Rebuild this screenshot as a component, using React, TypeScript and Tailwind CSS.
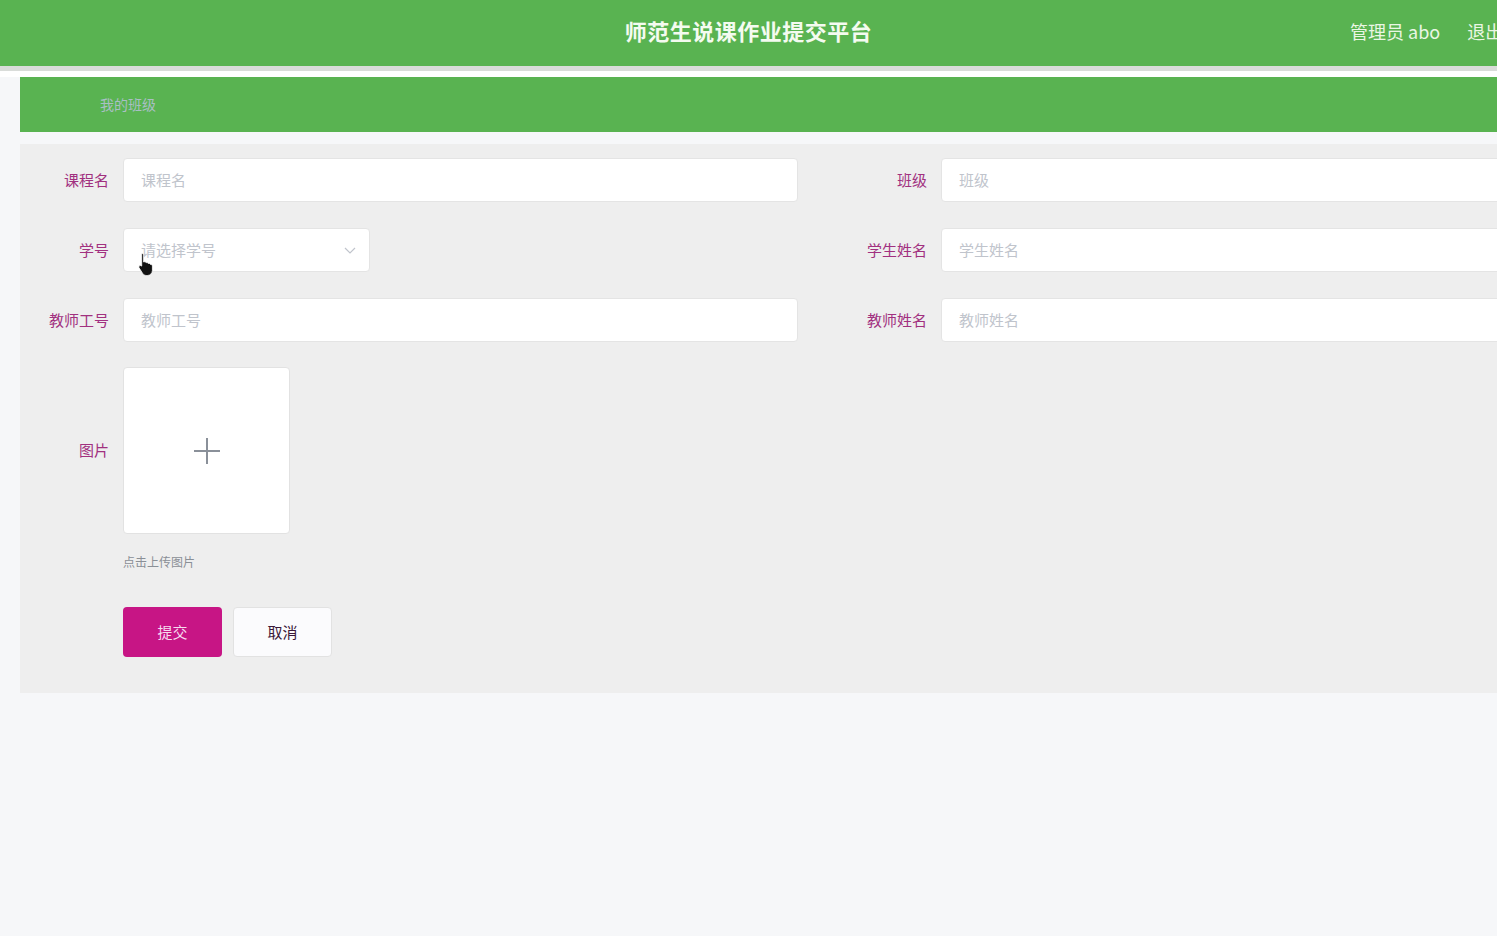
const font = { fontFamily: '"Microsoft YaHei", "Noto Sans CJK SC", "Liberation Sans", sans-serif' };

function Field({ label, placeholder, select }: { label: string; placeholder: string; select?: boolean }) {
    return (
        <div className="flex items-center h-[44px]">
            <label className="w-[103px] pr-[14px] text-right text-[15px] text-[#a1307f] shrink-0">{label}</label>
            {select ? (
                <div className="w-[247px] h-[44px] bg-white border border-[#e4e4e4] rounded-[4px] flex items-center justify-between pl-[17px] pr-[12px]">
                    <span className="text-[15px] text-[#c0c4cc]">{placeholder}</span>
                    <svg width="14" height="14" viewBox="0 0 14 14" fill="none">
                        <path d="M2 5l5 5 5-5" stroke="#c0c4cc" strokeWidth="1.2" />
                    </svg>
                </div>
            ) : (
                <div className="w-[675px] h-[44px] bg-white border border-[#e4e4e4] rounded-[4px] flex items-center pl-[17px]">
                    <span className="text-[15px] text-[#c0c4cc]">{placeholder}</span>
                </div>
            )}
        </div>
    );
}

export default function App() {
    return (
        <div className="w-[1497px] h-[936px] overflow-hidden bg-[#f6f7f9]" style={font}>
            {/* header */}
            <header className="relative h-[66px] bg-[#59b351] flex items-center justify-center pb-[5px]">
                <h1 className="text-[22px] font-bold text-[#f4fbf0] tracking-[0.5px]">师范生说课作业提交平台</h1>
                <div className="absolute left-[1350px] top-0 h-[62px] flex items-center gap-[27px] whitespace-nowrap text-[18px] text-[#eaf6e4]">
                    <span>管理员 abo</span>
                    <span>退出</span>
                </div>
            </header>
            <div className="h-[5px] bg-[#d9dcd9]"></div>
            <div className="h-[6px] bg-white"></div>

            <div className="pl-[20px]">
                {/* breadcrumb */}
                <div className="w-[1600px] h-[55px] bg-[#59b351] flex items-center pl-[80px]">
                    <span className="text-[14px] text-[#a9bfc4]">我的班级</span>
                </div>

                {/* form */}
                <div className="mt-[12px] w-[1600px] h-[549px] bg-[#eeeeee] pt-[14px] relative">
                    <div className="flex flex-col gap-[26px]">
                        <div className="flex">
                            <div className="w-[818px]"><Field label="课程名" placeholder="课程名" /></div>
                            <Field label="班级" placeholder="班级" />
                        </div>
                        <div className="flex">
                            <div className="w-[818px]"><Field label="学号" placeholder="请选择学号" select /></div>
                            <Field label="学生姓名" placeholder="学生姓名" />
                        </div>
                        <div className="flex">
                            <div className="w-[818px]"><Field label="教师工号" placeholder="教师工号" /></div>
                            <Field label="教师姓名" placeholder="教师姓名" />
                        </div>
                    </div>

                    <div className="flex items-center mt-[25px]">
                        <label className="w-[103px] pr-[14px] text-right text-[15px] text-[#a1307f]">图片</label>
                        <div className="w-[167px] h-[167px] bg-white border border-[#e2e2e2] rounded-[4px] flex items-center justify-center">
                            <svg width="28" height="28" viewBox="0 0 28 28">
                                <path d="M14 1v26M1 14h26" stroke="#8a9099" strokeWidth="2" />
                            </svg>
                        </div>
                    </div>
                    <div className="pl-[103px] mt-[19px] text-[12px] text-[#8a8f96]">点击上传图片</div>

                    <div className="pl-[103px] mt-[36px] flex gap-[11px]">
                        <button className="w-[99px] h-[50px] rounded-[4px] bg-[#c71585] text-[15px] text-[#f6dcef]">提交</button>
                        <button className="w-[99px] h-[50px] rounded-[4px] bg-[#fbfbfd] border border-[#e2e2e2] text-[15px] text-[#3a1838]">取消</button>
                    </div>

                    {/* mouse cursor */}
                    <svg className="absolute left-[118px] top-[108px]" width="18" height="24" viewBox="0 0 18 24">
                        <path d="M4 1.5c1 0 1.6.7 1.6 1.6V10l.6-.2c.9-.2 1.7.2 2 .9.9-.3 1.8 0 2.2.8.9-.3 1.9.1 2.2 1 .9-.1 1.8.5 1.8 1.5v4.5c0 2.8-2.2 5-5 5H8.5c-1.6 0-3-.8-3.9-2.1L1.2 16c-.6-.9-.3-2 .6-2.4.7-.3 1.4 0 1.9.5V3.1c0-.9.3-1.6.3-1.6z" fill="#111" stroke="#fff" strokeWidth="0.8" />
                    </svg>
                </div>
            </div>
        </div>
    );
}
